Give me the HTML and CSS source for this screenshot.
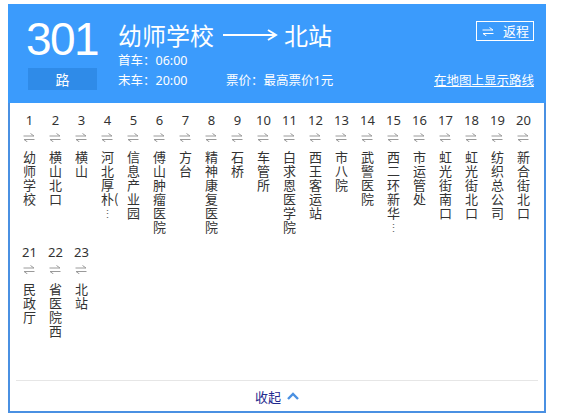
FILE: index.html
```html
<!DOCTYPE html>
<html lang="zh-CN">
<head>
<meta charset="utf-8">
<title>301路</title>
<link rel="stylesheet" href="styles.css">
</head>
<body>
<div class="card">
  <div class="header">
    <div class="line-no">
      <div class="num">301</div>
      <div class="lu">路</div>
    </div>
    <div class="info">
      <div class="top-row">
        <div class="title">幼师学校<svg class="long-arrow" width="56" height="14" viewBox="0 0 56 14"><line x1="1" y1="7" x2="53" y2="7" stroke="#fff" stroke-width="2"/><polyline points="46,2 54,7 46,12" fill="none" stroke="#fff" stroke-width="2"/></svg>北站</div>
        <div class="back"><svg class="swap" width="12" height="9" viewBox="0 0 12 9"><path d="M0.5 3h10.5l-3.5-2.5M11.5 6.5H1l3.5 2.5" fill="none" stroke="#fff" stroke-width="1"/></svg>返程</div>
      </div>
      <div class="sub first">首车：06:00</div>
      <div class="sub sub-row">
        <span class="last">末车：20:00</span>
        <span class="price">票价：最高票价1元</span>
        <span class="map">在地图上显示路线</span>
      </div>
    </div>
  </div>
  <div class="body">
    <div class="stops">
      <div class="stop"><div class="n">1</div><svg class="sw" width="12" height="9" viewBox="0 0 12 9"><path d="M0.5 3h10.5l-3.5-2.5M11.5 6.5H1l3.5 2.5" fill="none" stroke="#9a9a9a" stroke-width="1"/></svg><div class="name">幼师学校</div></div>
      <div class="stop"><div class="n">2</div><svg class="sw" width="12" height="9" viewBox="0 0 12 9"><path d="M0.5 3h10.5l-3.5-2.5M11.5 6.5H1l3.5 2.5" fill="none" stroke="#9a9a9a" stroke-width="1"/></svg><div class="name">横山北口</div></div>
      <div class="stop"><div class="n">3</div><svg class="sw" width="12" height="9" viewBox="0 0 12 9"><path d="M0.5 3h10.5l-3.5-2.5M11.5 6.5H1l3.5 2.5" fill="none" stroke="#9a9a9a" stroke-width="1"/></svg><div class="name">横山</div></div>
      <div class="stop"><div class="n">4</div><svg class="sw" width="12" height="9" viewBox="0 0 12 9"><path d="M0.5 3h10.5l-3.5-2.5M11.5 6.5H1l3.5 2.5" fill="none" stroke="#9a9a9a" stroke-width="1"/></svg><div class="name more">河北厚朴&#8288;(</div></div>
      <div class="stop"><div class="n">5</div><svg class="sw" width="12" height="9" viewBox="0 0 12 9"><path d="M0.5 3h10.5l-3.5-2.5M11.5 6.5H1l3.5 2.5" fill="none" stroke="#9a9a9a" stroke-width="1"/></svg><div class="name">信息产业园</div></div>
      <div class="stop"><div class="n">6</div><svg class="sw" width="12" height="9" viewBox="0 0 12 9"><path d="M0.5 3h10.5l-3.5-2.5M11.5 6.5H1l3.5 2.5" fill="none" stroke="#9a9a9a" stroke-width="1"/></svg><div class="name">傅山肿瘤医院</div></div>
      <div class="stop"><div class="n">7</div><svg class="sw" width="12" height="9" viewBox="0 0 12 9"><path d="M0.5 3h10.5l-3.5-2.5M11.5 6.5H1l3.5 2.5" fill="none" stroke="#9a9a9a" stroke-width="1"/></svg><div class="name">方台</div></div>
      <div class="stop"><div class="n">8</div><svg class="sw" width="12" height="9" viewBox="0 0 12 9"><path d="M0.5 3h10.5l-3.5-2.5M11.5 6.5H1l3.5 2.5" fill="none" stroke="#9a9a9a" stroke-width="1"/></svg><div class="name">精神康复医院</div></div>
      <div class="stop"><div class="n">9</div><svg class="sw" width="12" height="9" viewBox="0 0 12 9"><path d="M0.5 3h10.5l-3.5-2.5M11.5 6.5H1l3.5 2.5" fill="none" stroke="#9a9a9a" stroke-width="1"/></svg><div class="name">石桥</div></div>
      <div class="stop"><div class="n">10</div><svg class="sw" width="12" height="9" viewBox="0 0 12 9"><path d="M0.5 3h10.5l-3.5-2.5M11.5 6.5H1l3.5 2.5" fill="none" stroke="#9a9a9a" stroke-width="1"/></svg><div class="name">车管所</div></div>
      <div class="stop"><div class="n">11</div><svg class="sw" width="12" height="9" viewBox="0 0 12 9"><path d="M0.5 3h10.5l-3.5-2.5M11.5 6.5H1l3.5 2.5" fill="none" stroke="#9a9a9a" stroke-width="1"/></svg><div class="name">白求恩医学院</div></div>
      <div class="stop"><div class="n">12</div><svg class="sw" width="12" height="9" viewBox="0 0 12 9"><path d="M0.5 3h10.5l-3.5-2.5M11.5 6.5H1l3.5 2.5" fill="none" stroke="#9a9a9a" stroke-width="1"/></svg><div class="name">西王客运站</div></div>
      <div class="stop"><div class="n">13</div><svg class="sw" width="12" height="9" viewBox="0 0 12 9"><path d="M0.5 3h10.5l-3.5-2.5M11.5 6.5H1l3.5 2.5" fill="none" stroke="#9a9a9a" stroke-width="1"/></svg><div class="name">市八院</div></div>
      <div class="stop"><div class="n">14</div><svg class="sw" width="12" height="9" viewBox="0 0 12 9"><path d="M0.5 3h10.5l-3.5-2.5M11.5 6.5H1l3.5 2.5" fill="none" stroke="#9a9a9a" stroke-width="1"/></svg><div class="name">武警医院</div></div>
      <div class="stop"><div class="n">15</div><svg class="sw" width="12" height="9" viewBox="0 0 12 9"><path d="M0.5 3h10.5l-3.5-2.5M11.5 6.5H1l3.5 2.5" fill="none" stroke="#9a9a9a" stroke-width="1"/></svg><div class="name more">西二环新华</div></div>
      <div class="stop"><div class="n">16</div><svg class="sw" width="12" height="9" viewBox="0 0 12 9"><path d="M0.5 3h10.5l-3.5-2.5M11.5 6.5H1l3.5 2.5" fill="none" stroke="#9a9a9a" stroke-width="1"/></svg><div class="name">市运管处</div></div>
      <div class="stop"><div class="n">17</div><svg class="sw" width="12" height="9" viewBox="0 0 12 9"><path d="M0.5 3h10.5l-3.5-2.5M11.5 6.5H1l3.5 2.5" fill="none" stroke="#9a9a9a" stroke-width="1"/></svg><div class="name">虹光街南口</div></div>
      <div class="stop"><div class="n">18</div><svg class="sw" width="12" height="9" viewBox="0 0 12 9"><path d="M0.5 3h10.5l-3.5-2.5M11.5 6.5H1l3.5 2.5" fill="none" stroke="#9a9a9a" stroke-width="1"/></svg><div class="name">虹光街北口</div></div>
      <div class="stop"><div class="n">19</div><svg class="sw" width="12" height="9" viewBox="0 0 12 9"><path d="M0.5 3h10.5l-3.5-2.5M11.5 6.5H1l3.5 2.5" fill="none" stroke="#9a9a9a" stroke-width="1"/></svg><div class="name">纺织总公司</div></div>
      <div class="stop"><div class="n">20</div><svg class="sw" width="12" height="9" viewBox="0 0 12 9"><path d="M0.5 3h10.5l-3.5-2.5M11.5 6.5H1l3.5 2.5" fill="none" stroke="#9a9a9a" stroke-width="1"/></svg><div class="name">新合街北口</div></div>
      <div class="stop"><div class="n">21</div><svg class="sw" width="12" height="9" viewBox="0 0 12 9"><path d="M0.5 3h10.5l-3.5-2.5M11.5 6.5H1l3.5 2.5" fill="none" stroke="#9a9a9a" stroke-width="1"/></svg><div class="name">民政厅</div></div>
      <div class="stop"><div class="n">22</div><svg class="sw" width="12" height="9" viewBox="0 0 12 9"><path d="M0.5 3h10.5l-3.5-2.5M11.5 6.5H1l3.5 2.5" fill="none" stroke="#9a9a9a" stroke-width="1"/></svg><div class="name">省医院西</div></div>
      <div class="stop"><div class="n">23</div><svg class="sw" width="12" height="9" viewBox="0 0 12 9"><path d="M0.5 3h10.5l-3.5-2.5M11.5 6.5H1l3.5 2.5" fill="none" stroke="#9a9a9a" stroke-width="1"/></svg><div class="name">北站</div></div>
    </div>
    <div class="footer">
      <span class="fold">收起</span><svg class="chev" width="12" height="8" viewBox="0 0 12 8"><polyline points="1,7 6,2 11,7" fill="none" stroke="#4a90e2" stroke-width="2.4"/></svg>
    </div>
  </div>
</div>
</body>
</html>
```
FILE: styles.css
```css
* { box-sizing: border-box; }
html, body { margin: 0; padding: 0; background: #fff; }
body {
  font-family: "Noto Sans", "Noto Sans CJK SC", sans-serif;
  color: #333;
}
.card {
  margin: 4px 0 0 8px;
  width: 538px;
}
.header {
  height: 99px;
  background: #3b9bfc;
  color: #fff;
  display: flex;
  padding: 12px 12px 0 18px;
}
.line-no {
  width: 72px;
  flex: none;
}
.num {
  font-family: "Liberation Sans", Arial, sans-serif;
  font-size: 46px;
  line-height: 46px;
  letter-spacing: -1.6px;
  height: 46px;
}
.lu {
  margin: 6px 0 0 2px;
  width: 69px;
  height: 22px;
  line-height: 22px;
  background: #2f8be8;
  text-align: center;
  font-family: "Noto Sans CJK SC", sans-serif;
  font-size: 14px;
}
.info {
  flex: 1;
  margin-left: 20px;
}
.top-row {
  display: flex;
  justify-content: space-between;
  align-items: flex-start;
  margin-top: 4px;
}
.title {
  font-family: "Noto Sans CJK SC", sans-serif;
  font-size: 24px;
  line-height: 30px;
  height: 30px;
  display: flex;
  align-items: center;
}
.long-arrow {
  margin: 0 6px 0 8px;
}
.back {
  margin-top: 1px;
  border: 1px solid #fff;
  width: 58px;
  height: 20px;
  font-family: "Noto Sans CJK SC", sans-serif;
  font-size: 13px;
  line-height: 18px;
  display: flex;
  align-items: center;
  padding-left: 5px;
}
.swap { margin-right: 9px; }
.sub {
  font-family: "Noto Sans", "Noto Sans CJK SC", sans-serif;
  font-size: 12.5px;
  line-height: 20px;
  height: 20px;
}
.sub.first { margin-top: 1px; }
.sub-row {
  display: flex;
}
.last { width: 108px; }
.price { flex: 1; }
.map { text-decoration: underline; }
.body {
  border: 2px solid #4a90e2;
  border-top: none;
}
.stops {
  display: grid;
  grid-template-columns: repeat(20, 13px);
  column-gap: 13px;
  row-gap: 10px;
  padding: 9px 0 42px 13px;
  align-items: start;
}
.stop {
  width: 13px;
}
.n {
  font-size: 13px;
  line-height: 16px;
  height: 16px;
  text-align: center;
  white-space: nowrap;
  width: 13px;
  display: flex;
  justify-content: center;
}
.sw {
  display: block;
  margin: 5px 0 8px 0;
}
.name {
  font-family: "Noto Sans CJK SC", sans-serif;
  font-size: 13px;
  line-height: 14px;
  width: 13px;
  color: #333;
}
.name.more::after {
  content: "⋮";
  display: block;
  color: #666;
  font-size: 11px;
  line-height: 14px;
  height: 14px;
  text-align: center;
  width: 13px;
}
.footer {
  margin: 0 6px 0 6px;
  border-top: 1px solid #e6e6e6;
  height: 31px;
  display: flex;
  align-items: center;
  justify-content: center;
}
.fold {
  font-family: "Noto Sans CJK SC", sans-serif;
  font-size: 13px;
  color: #1f2a8e;
  margin-right: 6px;
}
.chev { display: block; }
```
